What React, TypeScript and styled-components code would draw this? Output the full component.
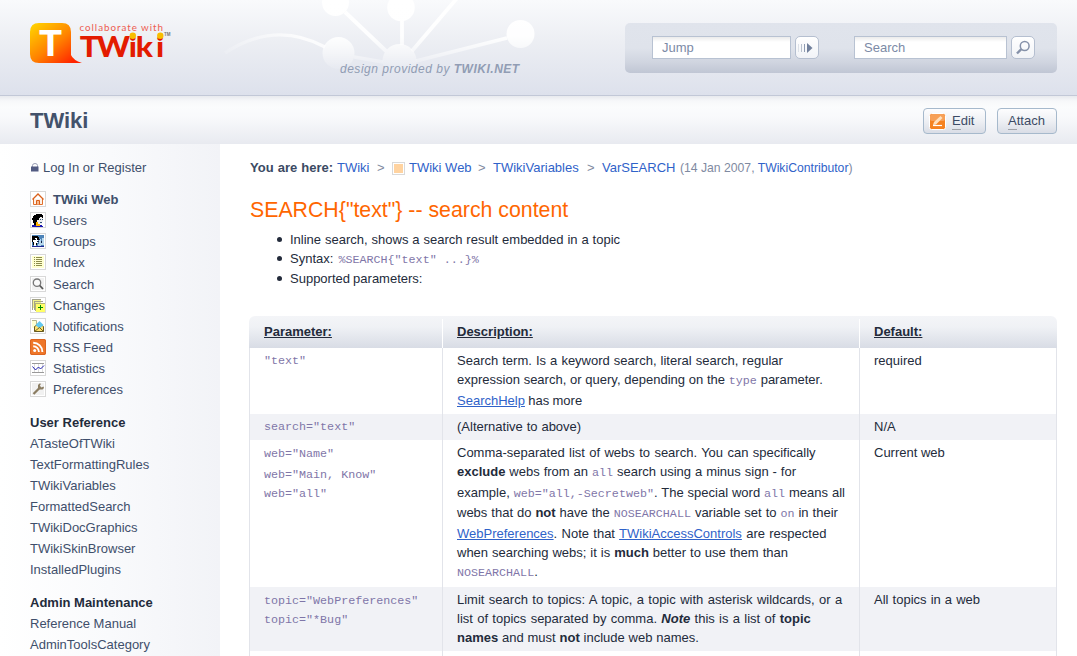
import React from "react";
import styled, { createGlobalStyle, css } from "styled-components";

const GlobalStyle = createGlobalStyle`
  * { box-sizing: border-box; }
  html, body { margin: 0; height: 656px; overflow: hidden; background: #fff; }
  body { font: 13px/19px "Liberation Sans", Arial, sans-serif; color: #232b3b; }
`;

const Page = styled.div`
  width: 1077px;
  height: 656px;
  overflow: hidden;
`;

const Header = styled.header`
  position: relative;
  display: flex;
  justify-content: space-between;
  height: 96px;
  padding: 23px 20px 0 30px;
  border-bottom: 1px solid #c2c8d7;
  background: linear-gradient(#f9fafc, #eceef3 45%, #dde1ec);
`;

const HeaderArt = styled.svg`
  position: absolute;
  left: 200px;
  top: 0;
`;

const LogoSvg = styled.svg`
  position: relative;
  display: block;
  overflow: visible;
`;

const Tagline = styled.div`
  position: absolute;
  left: 340px;
  top: 60px;
  font-size: 12px;
  font-style: italic;
  letter-spacing: 0.51px;
  color: #919db4;
  white-space: nowrap;
`;

const SearchPanel = styled.div`
  position: relative;
  display: flex;
  width: 432px;
  height: 50px;
  padding: 13px 0 0 27px;
  border-radius: 5px;
  background: linear-gradient(#e0e4ec, #dfe3eb 50%, #d0d5e0 78%, #c0c6d4);
`;

const Field = styled.div<{ $w: number }>`
  width: ${(p) => p.$w}px;
  height: 23px;
  padding-left: 9px;
  border: 1px solid #b8c2d2;
  background: linear-gradient(#ebebeb, #fff 5px);
  line-height: 21px;
  color: #7c8aa6;
`;

const RoundButton = styled.div<{ $after?: number }>`
  display: flex;
  align-items: center;
  justify-content: center;
  width: 24px;
  height: 23px;
  margin: 0 ${(p) => p.$after || 0}px 0 4px;
  border: 1px solid #b5bfd0;
  border-radius: 5px;
  background: linear-gradient(#fff, #f1f3f7);
`;

const TitleBar = styled.div`
  display: flex;
  justify-content: space-between;
  height: 48px;
  padding: 12px 20px 0 30px;
  background: linear-gradient(#e8eaee, #f7f8fa 5px, #fbfcfd 11px, #f8f9fb 22px, #e8eaf0);
`;

const WebTitle = styled.div`
  font-size: 22px;
  line-height: 26px;
  font-weight: bold;
  color: #43526b;
`;

const Actions = styled.div`
  display: flex;
  gap: 11px;
`;

const ActionButton = styled.div<{ $w: number }>`
  display: flex;
  align-items: center;
  gap: 6px;
  width: ${(p) => p.$w}px;
  height: 26px;
  padding-left: ${(p) => (p.$w === 60 ? 10 : 5)}px;
  border: 1px solid #a6b9cc;
  border-radius: 4px;
  background: linear-gradient(#fdfdfe, #eef0f4 50%, #d9dde6);
  color: #3c4b66;
`;

const AccessKey = styled.span`
  display: inline-block;
  height: 17px;
  line-height: 16px;
  border-bottom: 1px solid #a0a3a9;
  vertical-align: top;
`;

const ButtonText = styled.span`
  height: 17px;
  line-height: 16px;
`;

const Body = styled.div`
  display: flex;
  height: 512px;
`;

const Sidebar = styled.nav`
  width: 220px;
  padding: 13px 0 0 30px;
  line-height: 21px;
  color: #3f4f6b;
  background: linear-gradient(90deg, #fff, #f9fafc 50%, #f2f3f7);
`;

const NavGroup = styled.div<{ $before?: number }>`
  margin-top: ${(p) => p.$before || 0}px;
`;

const NavItem = styled.div<{ $bold?: boolean; $gap?: number; $before?: number }>`
  display: flex;
  height: 21px;
  gap: ${(p) => p.$gap ?? 7}px;
  margin-top: ${(p) => p.$before || 0}px;
  font-weight: ${(p) => (p.$bold ? "bold" : "normal")};
  white-space: nowrap;
`;

const NavHeading = styled.div`
  height: 21px;
  font-weight: bold;
  color: #232b3b;
`;

const NavIcon = styled.svg`
  display: block;
  flex: none;
  margin-top: 2px;
`;

const LockIcon = styled.svg`
  display: block;
  margin: 6px 0 0 1px;
`;

const Main = styled.main`
  width: 857px;
  padding: 13px 20px 0 29px;
`;

const Crumbs = styled.div`
  display: flex;
  height: 21px;
  padding-left: 1px;
  line-height: 21px;
  color: #7f8aa1;
  white-space: pre;
`;

const CrumbLabel = styled.b`
  width: 87px;
  word-spacing: 0.5px;
  color: #3b4a63;
`;

const CrumbLink = styled.span<{ $w?: number }>`
  ${(p) => p.$w && css`width: ${p.$w}px;`}
  color: #2f62c9;
`;

const Arrow = styled.span`
  width: 15px;
`;

const Swatch = styled.span`
  width: 13px;
  height: 13px;
  margin: 5px 4px 0 0;
  border: 1px solid #d9d9d9;
  background: #ffd3a0;
  box-shadow: inset 0 0 0 1px #fff;
`;

const Revision = styled.span`
  padding-top: 1px;
  font-size: 12.2px;
`;

const Heading = styled.h1`
  margin: 19px 0 7px 1px;
  font-size: 21.3px;
  line-height: 26px;
  font-weight: normal;
  color: #ff6600;
`;

const List = styled.ul`
  margin: 0 0 28px;
  padding: 0 0 0 28px;
  height: 58px;
  list-style: none;
`;

const Item = styled.li<{ $before?: number; $ws?: number }>`
  display: flex;
  align-items: center;
  height: 19px;
  margin-top: ${(p) => p.$before || 0}px;
  word-spacing: ${(p) => p.$ws || 0}px;
  white-space: pre;
  &::before {
    content: "";
    width: 5px;
    height: 5px;
    margin-right: 8px;
    border-radius: 50%;
    background: #232b3b;
  }
`;

const Code = styled.code`
  font: 11.7px/1 "Liberation Mono", "Courier New", monospace;
  word-spacing: 0;
  color: #7f76a8;
`;

const Link = styled.span`
  color: #2f62c9;
  text-decoration: underline;
`;

const Table = styled.div`
  width: 808px;
`;

const columns = css`
  display: grid;
  grid-template-columns: 194px 417px 197px;
`;

const HeadRow = styled.div`
  ${columns}
  height: 32px;
  border-radius: 6px 6px 0 0;
  background: linear-gradient(#f4f5f8, #eff1f5 35%, #d8dce5);
  font-weight: bold;
  text-decoration: underline;
`;

const HeadCell = styled.div`
  height: 29px;
  margin-top: 3px;
  padding: 3px 0 0 14px;
  border-right: 1px solid #fff;
  &:first-child { padding-left: 15px; }
  &:last-child { border: 0; }
`;

const Row = styled.div<{ $h: number; $alt?: boolean }>`
  ${columns}
  height: ${(p) => p.$h}px;
  background: ${(p) => (p.$alt ? "#f1f2f6" : "#fff")};
`;

const Cell = styled.div`
  padding: 3px 0 0 14px;
  border-right: 1px solid #e2e4ea;
  &:first-child { border-left: 1px solid #e2e4ea; }
`;

const Line = styled.div<{ $before?: number; $ws?: number }>`
  height: 19px;
  margin-top: ${(p) => p.$before || 0}px;
  word-spacing: ${(p) => p.$ws || 0}px;
  white-space: nowrap;
`;

function Logo() {
  return (
    <LogoSvg width="142" height="42" viewBox="30 23 142 42">
      <defs>
        <linearGradient id="bubble" x1="0" y1="0" x2="1" y2="1">
          <stop offset="0" stopColor="#ffd800" />
          <stop offset="0.5" stopColor="#ff8200" />
          <stop offset="0.9" stopColor="#ff2400" />
        </linearGradient>
      </defs>
      <path d="M39 23h23q9 0 9 9v23q2 5 11 8H39q-9 0-9-9V32q0-9 9-9z" fill="url(#bubble)" />
      <text x="39" y="56" fontFamily="Lato" fontWeight="900" fontSize="36" fill="#fff" textLength="23" lengthAdjust="spacingAndGlyphs">T</text>
      <text x="79.5" y="30.8" fontFamily="Lato" fontSize="9.8" fill="#ee5c50" textLength="83.5" lengthAdjust="spacing">collaborate with</text>
      <g transform="scale(1.1 1)">
        <text x="72.5 87.9 117 123.4 141.8" y="57" fontFamily="Lato" fontWeight="900" fontSize="28.7" fill="#e31b00">TWiki</text>
      </g>
      <circle cx="132.8" cy="35.8" r="3.2" fill="#f8bd00" />
      <circle cx="160.3" cy="35.8" r="3.2" fill="#f8bd00" />
      <text x="164" y="36" fontFamily="Liberation Sans" fontSize="4.5" fontWeight="bold" fill="#777">TM</text>
    </LogoSvg>
  );
}

function Network() {
  return (
    <HeaderArt width="360" height="95" viewBox="200 0 360 95">
      <defs>
        <linearGradient id="fade" gradientUnits="userSpaceOnUse" x1="0" y1="0" x2="0" y2="72">
          <stop offset="0" stopColor="#fff" />
          <stop offset="0.5" stopColor="#fff" stopOpacity="0.95" />
          <stop offset="1" stopColor="#fff" stopOpacity="0" />
        </linearGradient>
        <linearGradient id="arc" gradientUnits="userSpaceOnUse" x1="222" y1="0" x2="300" y2="0">
          <stop offset="0" stopColor="#fff" stopOpacity="0.1" />
          <stop offset="1" stopColor="#fff" stopOpacity="0.8" />
        </linearGradient>
      </defs>
      <path d="M225 53Q275 20 325 47" fill="none" stroke="url(#arc)" strokeWidth="3.4" />
      <g stroke="url(#fade)" strokeWidth="3.8" fill="none">
        <path d="M345 12L386 51M402 21V45M458 -3L412 51M354 57L383 62M416 61L507 38" />
      </g>
      <g fill="url(#fade)">
        <circle cx="335.500" cy="2.500" r="13.500" />
        <circle cx="401" cy="7.500" r="13.800" />
        <circle cx="520.500" cy="34" r="14" />
        <circle cx="338.500" cy="53" r="16" />
        <circle cx="399.500" cy="61" r="17" />
      </g>
    </HeaderArt>
  );
}

function Icon({ children, bare }: { children: React.ReactNode; bare?: boolean }) {
  return (
    <NavIcon width="16" height="16" viewBox="0 0 16 16">
      {!bare && <rect x=".5" y=".5" width="15" height="15" fill="#fff" stroke="#d8d8d8" />}
      {children}
    </NavIcon>
  );
}

const icons = {
  home: (
    <Icon>
      <path d="M3.500 8v5.500h9V8" fill="#fdf0e6" stroke="#e0702c" />
      <path d="M2.500 8.500L8 3l5.500 5.500" fill="none" stroke="#d9601a" strokeWidth="1.300" />
      <path d="M6.500 13.500V9.500h3v4" fill="#f7b98e" stroke="#d9601a" />
    </Icon>
  ),
  user: (
    <Icon>
      <path d="M4 3h2V2h6v1h1v3h-1v5h-2v2H4v-2H3V8H2V6h1V4h1z" fill="#000" />
      <path d="M9 6h1V5h2v1h1v4h-1v2H8v-2H7V8h2z" fill="#eee" />
      <path d="M10 7h1v1h-1zM12 7h1v1h-1zM10 10h2v1h-2z" fill="#357" />
      <path d="M6 10h2v2h2v2H6z" fill="#ffb400" />
      <path d="M2 13h4v1h4v-1h2v1h1v1H2z" fill="#1a16b0" />
    </Icon>
  ),
  group: (
    <Icon>
      <path d="M2 2h12v11H2z" fill="#4d83b8" />
      <path d="M2 3h6v1h1v3H7v5H3V9H2z" fill="#000" />
      <path d="M5 5h2v2h1v3H6v3H4V9H3V7h2z" fill="#fff" />
      <path d="M9 6h2v2h1V5h2v7h-3v2H8v-3h1z" fill="#b7d7ec" />
      <path d="M5 6h1v1H5zM7 8h2v1H7zM11 8h1v2h-1zM9 6h1v1H9z" fill="#124" />
      <path d="M2 13h12v1H2z" fill="#1d2390" />
    </Icon>
  ),
  index: (
    <Icon>
      <path d="M2 2h12v12H2z" fill="#ffffd0" />
      <path d="M4 3.500h1M6 3.500h6M4 5.500h1M6 5.500h6M4 7.500h1M6 7.500h6M4 9.500h1M6 9.500h6M4 11.500h1M6 11.500h6" stroke="#8b8b4c" />
    </Icon>
  ),
  search: (
    <Icon>
      <path d="M2 2h12v12H2z" fill="#f1f1f1" />
      <circle cx="7" cy="6.700" r="3.700" fill="#fafafa" stroke="#777" strokeWidth="1.300" />
      <path d="M9.700 9.500l3.300 3.500" stroke="#555" strokeWidth="1.800" />
    </Icon>
  ),
  changes: (
    <Icon>
      <path d="M2 2h9v9H2z" fill="#f3f38d" />
      <path d="M2 2.500h9M2.500 3v10M4 4.500h9M4.500 5v8" stroke="#a4a48b" />
      <path d="M6 6h9v9H6z" fill="#ffff66" />
      <path d="M5 6.500h10M5.500 6v8" stroke="#b2b278" />
      <path d="M10.500 8v5M8 10.500h5" stroke="#008a00" />
    </Icon>
  ),
  mail: (
    <Icon>
      <path d="M2 2h5v8H2z" fill="#ffffd0" />
      <path d="M2 2.500h4.500V10" fill="none" stroke="#b5b58b" />
      <path d="M4.500 8.500l5-3 4 3v5h-9z" fill="#ffe36f" stroke="#665a20" />
      <path d="M9.500 3l4 4-4 3.500L5.500 7z" fill="#62c8ee" />
      <path d="M4.500 13.500l5-4 4 4" fill="none" stroke="#77651c" />
    </Icon>
  ),
  rss: (
    <Icon bare>
      <rect width="16" height="16" rx="2" fill="#ee7629" />
      <rect x=".5" y=".5" width="15" height="15" rx="1.500" fill="none" stroke="#dc6420" />
      <circle cx="4.700" cy="11.500" r="1.500" fill="#fff" />
      <path d="M3.200 7.200a5.700 5.700 0 0 1 5.700 5.700M3.200 3.700a9.200 9.200 0 0 1 9.200 9.200" fill="none" stroke="#fff" strokeWidth="1.900" />
    </Icon>
  ),
  stats: (
    <Icon>
      <path d="M4.500 3v9M8.500 3v9M12.500 3v9" stroke="#ddd" />
      <path d="M2 3.500h12M2 12.500h12" stroke="#999" />
      <path d="M2.500 6.500l3 3.500 3-3 2 2 3.500-3.500" fill="none" stroke="#2020b0" strokeWidth="1" />
    </Icon>
  ),
  wrench: (
    <Icon>
      <path d="M2 2h12v12H2z" fill="#f1f1f1" />
      <path d="M3.500 13l6-6" stroke="#8b7d62" strokeWidth="2.300" />
      <path d="M9.500 2.500L8 4v3l1.500 1.500h3L14 7l-.5-1.500-2 1-1.700-1.700 1.200-2z" fill="#8b7d62" />
    </Icon>
  ),
};

const nav: [keyof typeof icons, string][] = [
  ["home", "TWiki Web"],
  ["user", "Users"],
  ["group", "Groups"],
  ["index", "Index"],
  ["search", "Search"],
  ["changes", "Changes"],
  ["mail", "Notifications"],
  ["rss", "RSS Feed"],
  ["stats", "Statistics"],
  ["wrench", "Preferences"],
];

const reference = ["ATasteOfTWiki", "TextFormattingRules", "TWikiVariables", "FormattedSearch", "TWikiDocGraphics", "TWikiSkinBrowser", "InstalledPlugins"];
const admin = ["Reference Manual", "AdminToolsCategory"];

export default function App() {
  return (
    <Page>
      <GlobalStyle />
      <Header>
        <Network />
        <Logo />
        <Tagline>design provided by <b>TWIKI.NET</b></Tagline>
        <SearchPanel>
          <Field $w={139}>Jump</Field>
          <RoundButton $after={35}>
            <svg width="18" height="12" viewBox="1 0 18 12">
              <path d="M1.500 2v8" stroke="#dde1e8" />
              <path d="M4.500 2v8" stroke="#b9c1ce" />
              <path d="M7.500 2v8" stroke="#8e9ab0" />
              <path d="M10 1v10l5.500-5z" fill="#71809c" />
            </svg>
          </RoundButton>
          <Field $w={153}>Search</Field>
          <RoundButton>
            <svg width="16" height="16" viewBox="0 0 16 16" fill="none" stroke="#8591a9">
              <circle cx="9.700" cy="6" r="4.400" strokeWidth="1.500" />
              <path d="M6.300 9.200L2 13.500" strokeWidth="2.400" />
            </svg>
          </RoundButton>
        </SearchPanel>
      </Header>
      <TitleBar>
        <WebTitle>TWiki</WebTitle>
        <Actions>
          <ActionButton $w={63}>
            <svg width="17" height="17" viewBox="0 0 17 17">
              <rect x=".5" y=".5" width="16" height="16" rx="2" fill="#f58220" stroke="#fff" />
              <rect x="1" y="1" width="15" height="7" rx="2" fill="#f7a057" />
              <path d="M4 12l1-3 6.500-6 2 2L7 11.500z" fill="#ffe0bd" />
              <path d="M4 12.500h9" stroke="#fff" strokeWidth="1.200" />
            </svg>
            <ButtonText><AccessKey>E</AccessKey>dit</ButtonText>
          </ActionButton>
          <ActionButton $w={60}>
            <ButtonText><AccessKey>A</AccessKey>ttach</ButtonText>
          </ActionButton>
        </Actions>
      </TitleBar>
      <Body>
        <Sidebar>
          <NavItem $gap={4}>
            <LockIcon width="8" height="9" viewBox="0 0 8 9">
              <path d="M1.500 4V2.500q0-2 2.500-2t2.500 2V4" fill="none" stroke="#9a9fb5" />
              <rect y="3.500" width="7.500" height="5" fill="#525b82" />
            </LockIcon>
            Log In or Register
          </NavItem>
          <NavGroup $before={11}>
            {nav.map(([key, label]) => (
              <NavItem key={key} $bold={key === "home"} $before={key === "search" ? 1 : 0}>
                {icons[key]}
                {label}
              </NavItem>
            ))}
          </NavGroup>
          <NavGroup $before={12}>
            <NavHeading>User Reference</NavHeading>
            {reference.map((t) => <NavItem key={t}>{t}</NavItem>)}
          </NavGroup>
          <NavGroup $before={12}>
            <NavHeading>Admin Maintenance</NavHeading>
            {admin.map((t) => <NavItem key={t}>{t}</NavItem>)}
          </NavGroup>
        </Sidebar>
        <Main>
          <Crumbs>
            <CrumbLabel>You are here:</CrumbLabel>
            <CrumbLink $w={40}>TWiki</CrumbLink>
            <Arrow>&gt;</Arrow>
            <Swatch />
            <CrumbLink $w={69}>TWiki Web</CrumbLink>
            <Arrow>&gt;</Arrow>
            <CrumbLink $w={94}>TWikiVariables</CrumbLink>
            <Arrow>&gt;</Arrow>
            <CrumbLink $w={78}>VarSEARCH</CrumbLink>
            <Revision>(14 Jan 2007, <CrumbLink>TWikiContributor</CrumbLink>)</Revision>
          </Crumbs>
          <Heading>SEARCH{"{\"text\"}"} -- search content</Heading>
          <List>
            <Item $ws={0.3}>Inline search, shows a search result embedded in a topic</Item>
            <Item $ws={1.5}><span>Syntax: <Code>{'%SEARCH{"text" ...}%'}</Code></span></Item>
            <Item $before={1} $ws={-0.5}>Supported parameters:</Item>
          </List>
          <Table>
            <HeadRow>
              <HeadCell>Parameter:</HeadCell>
              <HeadCell>Description:</HeadCell>
              <HeadCell>Default:</HeadCell>
            </HeadRow>
            <Row $h={66}>
              <Cell><Line $before={-1}><Code>"text"</Code></Line></Cell>
              <Cell>
                <Line $ws={0.45}>Search term. Is a keyword search, literal search, regular</Line>
                <Line $ws={0.15}>expression search, or query, depending on the <Code>type</Code> parameter.</Line>
                <Line $before={2} $ws={-0.3}><Link>SearchHelp</Link> has more</Line>
              </Cell>
              <Cell><Line>required</Line></Cell>
            </Row>
            <Row $h={26} $alt>
              <Cell><Line $before={-1}><Code>search="text"</Code></Line></Cell>
              <Cell><Line $ws={0.3}>(Alternative to above)</Line></Cell>
              <Cell><Line>N/A</Line></Cell>
            </Row>
            <Row $h={147}>
              <Cell>
                <Line><Code>web="Name"</Code></Line>
                <Line $before={2}><Code>web="Main, Know"</Code></Line>
                <Line><Code>web="all"</Code></Line>
              </Cell>
              <Cell>
                <Line $ws={0.75}>Comma-separated list of webs to search. You can specifically</Line>
                <Line $ws={0.33}><b>exclude</b> webs from an <Code>all</Code> search using a minus sign - for</Line>
                <Line $before={2} $ws={0.3}>example, <Code>web="all,-Secretweb"</Code>. The special word <Code>all</Code> means all</Line>
                <Line $before={1} $ws={0.35}>webs that do <b>not</b> have the <Code>NOSEARCHALL</Code> variable set to <Code>on</Code> in their</Line>
                <Line $before={2} $ws={0.7}><Link>WebPreferences</Link>. Note that <Link>TWikiAccessControls</Link> are respected</Line>
                <Line $ws={0.36}>when searching webs; it is <b>much</b> better to use them than</Line>
                <Line><Code>NOSEARCHALL</Code>.</Line>
              </Cell>
              <Cell><Line>Current web</Line></Cell>
            </Row>
            <Row $h={64} $alt>
              <Cell>
                <Line><Code>topic="WebPreferences"</Code></Line>
                <Line><Code>topic="*Bug"</Code></Line>
              </Cell>
              <Cell>
                <Line $ws={0.8}>Limit search to topics: A topic, a topic with asterisk wildcards, or a</Line>
                <Line $ws={0.7}>list of topics separated by comma. <b><i>Note</i></b> this is a list of <b>topic</b></Line>
                <Line $ws={0.2}><b>names</b> and must <b>not</b> include web names.</Line>
              </Cell>
              <Cell><Line $ws={0.5}>All topics in a web</Line></Cell>
            </Row>
            <Row $h={5}>
              <Cell /><Cell /><Cell />
            </Row>
          </Table>
        </Main>
      </Body>
    </Page>
  );
}
